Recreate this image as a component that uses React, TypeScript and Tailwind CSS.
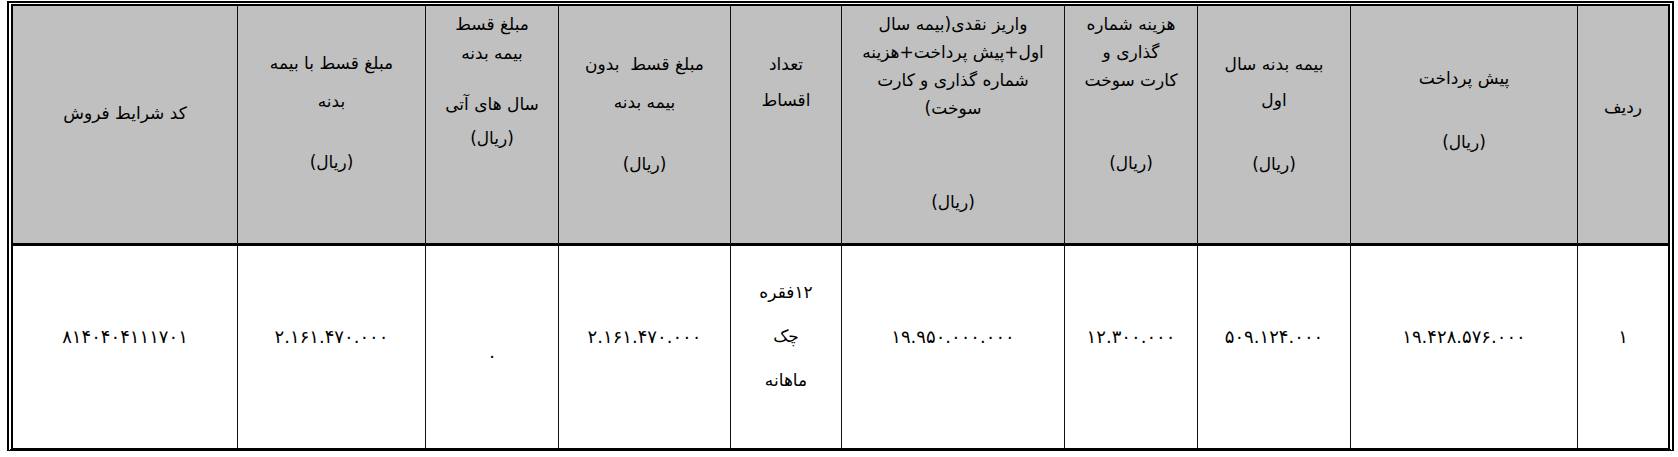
const font = { fontFamily: '"DejaVu Sans", sans-serif' }

function Head({ className = '', children }: { className?: string; children: React.ReactNode }) {
  return (
    <div className={`bg-[#c0c0c0] border-b-[3px] border-black flex flex-col items-center text-center ${className}`}>
      {children}
    </div>
  )
}

function Cell({ className = '', children }: { className?: string; children: React.ReactNode }) {
  return <div className={`flex flex-col items-center justify-center text-center ${className}`}>{children}</div>
}

const L = ({ c = '', children }: { c?: string; children: React.ReactNode }) => (
  <div className={`leading-[28px] whitespace-pre ${c}`}>{children}</div>
)

// numbers in the body row
const N = ({ children }: { children: React.ReactNode }) => (
  <span className="text-[18px] tracking-[2.5px]">{children}</span>
)

export default function App() {
  return (
    <div className="bg-white w-[1678px] h-[457px] pl-[7px] pt-[1px]" style={font}>
      <div
        dir="rtl"
        className="w-[1667px] border-x-[6px] border-t-[5px] border-double border-black [border-bottom-style:solid] border-b-[3px] grid grid-cols-[91px_227px_153px_133px_223px_111px_172px_133px_188px_224px] grid-rows-[240px_202px] text-[17px] text-black"
      >
        {/* header */}
        <Head className="justify-center pb-[36px] border-l border-l-[#111]">
          <L>ردیف</L>
        </Head>
        <Head className="pt-[58px] border-l border-l-[#111]">
          <L>پیش پرداخت</L>
          <L c="mt-[36px]">(ریال)</L>
        </Head>
        <Head className="pt-[44px] border-l border-l-[#111]">
          <L>بیمه بدنه سال</L>
          <L c="mt-[8px]">اول</L>
          <L c="mt-[36px]">(ریال)</L>
        </Head>
        <Head className="pt-[4px] border-l border-l-[#111]">
          <L>هزینه شماره</L>
          <L>گذاری و</L>
          <L>کارت سوخت</L>
          <L c="mt-[55px]">(ریال)</L>
        </Head>
        <Head className="pt-[4px] border-l border-l-[#111]">
          <L>واریز نقدی(بیمه سال</L>
          <L>اول+پیش پرداخت+هزینه</L>
          <L>شماره گذاری و کارت</L>
          <L>سوخت)</L>
          <L c="mt-[66px]">(ریال)</L>
        </Head>
        <Head className="pt-[44px] border-l border-l-[#111]">
          <L>تعداد</L>
          <L c="mt-[8px]">اقساط</L>
        </Head>
        <Head className="pt-[44px] border-l border-l-[#111]">
          <L>مبلغ قسط  بدون</L>
          <L c="mt-[10px]">بیمه بدنه</L>
          <L c="mt-[34px]">(ریال)</L>
        </Head>
        <Head className="pt-[4px] border-l border-l-[#111]">
          <L>مبلغ قسط</L>
          <L c="mt-[1px]">بیمه بدنه</L>
          <L c="mt-[23px]">سال های آتی</L>
          <L c="mt-[6px]">(ریال)</L>
        </Head>
        <Head className="pt-[43px] border-l border-l-[#111]">
          <L>مبلغ قسط با بیمه</L>
          <L c="mt-[10px]">بدنه</L>
          <L c="mt-[33px]">(ریال)</L>
        </Head>
        <Head className="justify-center pb-[24px]">
          <L>کد شرایط فروش</L>
        </Head>

        {/* body */}
        <Cell className="pb-[22px] border-l border-l-[#111]"><N>۱</N></Cell>
        <Cell className="pb-[22px] border-l border-l-[#111]"><N>۱۹.۴۲۸.۵۷۶.۰۰۰</N></Cell>
        <Cell className="pb-[22px] border-l border-l-[#111]"><N>۵۰۹.۱۲۴.۰۰۰</N></Cell>
        <Cell className="pb-[22px] border-l border-l-[#111]"><N>۱۲.۳۰۰.۰۰۰</N></Cell>
        <Cell className="pb-[22px] border-l border-l-[#111]"><N>۱۹.۹۵۰.۰۰۰.۰۰۰</N></Cell>
        <Cell className="pb-[22px] border-l border-l-[#111] leading-[44px]">
          <div>۱۲فقره</div>
          <div>چک</div>
          <div>ماهانه</div>
        </Cell>
        <Cell className="pb-[22px] border-l border-l-[#111]"><N>۲.۱۶۱.۴۷۰.۰۰۰</N></Cell>
        <Cell className="pt-[16px] border-l border-l-[#111]"><N>۰</N></Cell>
        <Cell className="pb-[22px] border-l border-l-[#111]"><N>۲.۱۶۱.۴۷۰.۰۰۰</N></Cell>
        <Cell className="pb-[22px]"><N>۸۱۴۰۴۰۴۱۱۱۷۰۱</N></Cell>
      </div>
    </div>
  )
}
